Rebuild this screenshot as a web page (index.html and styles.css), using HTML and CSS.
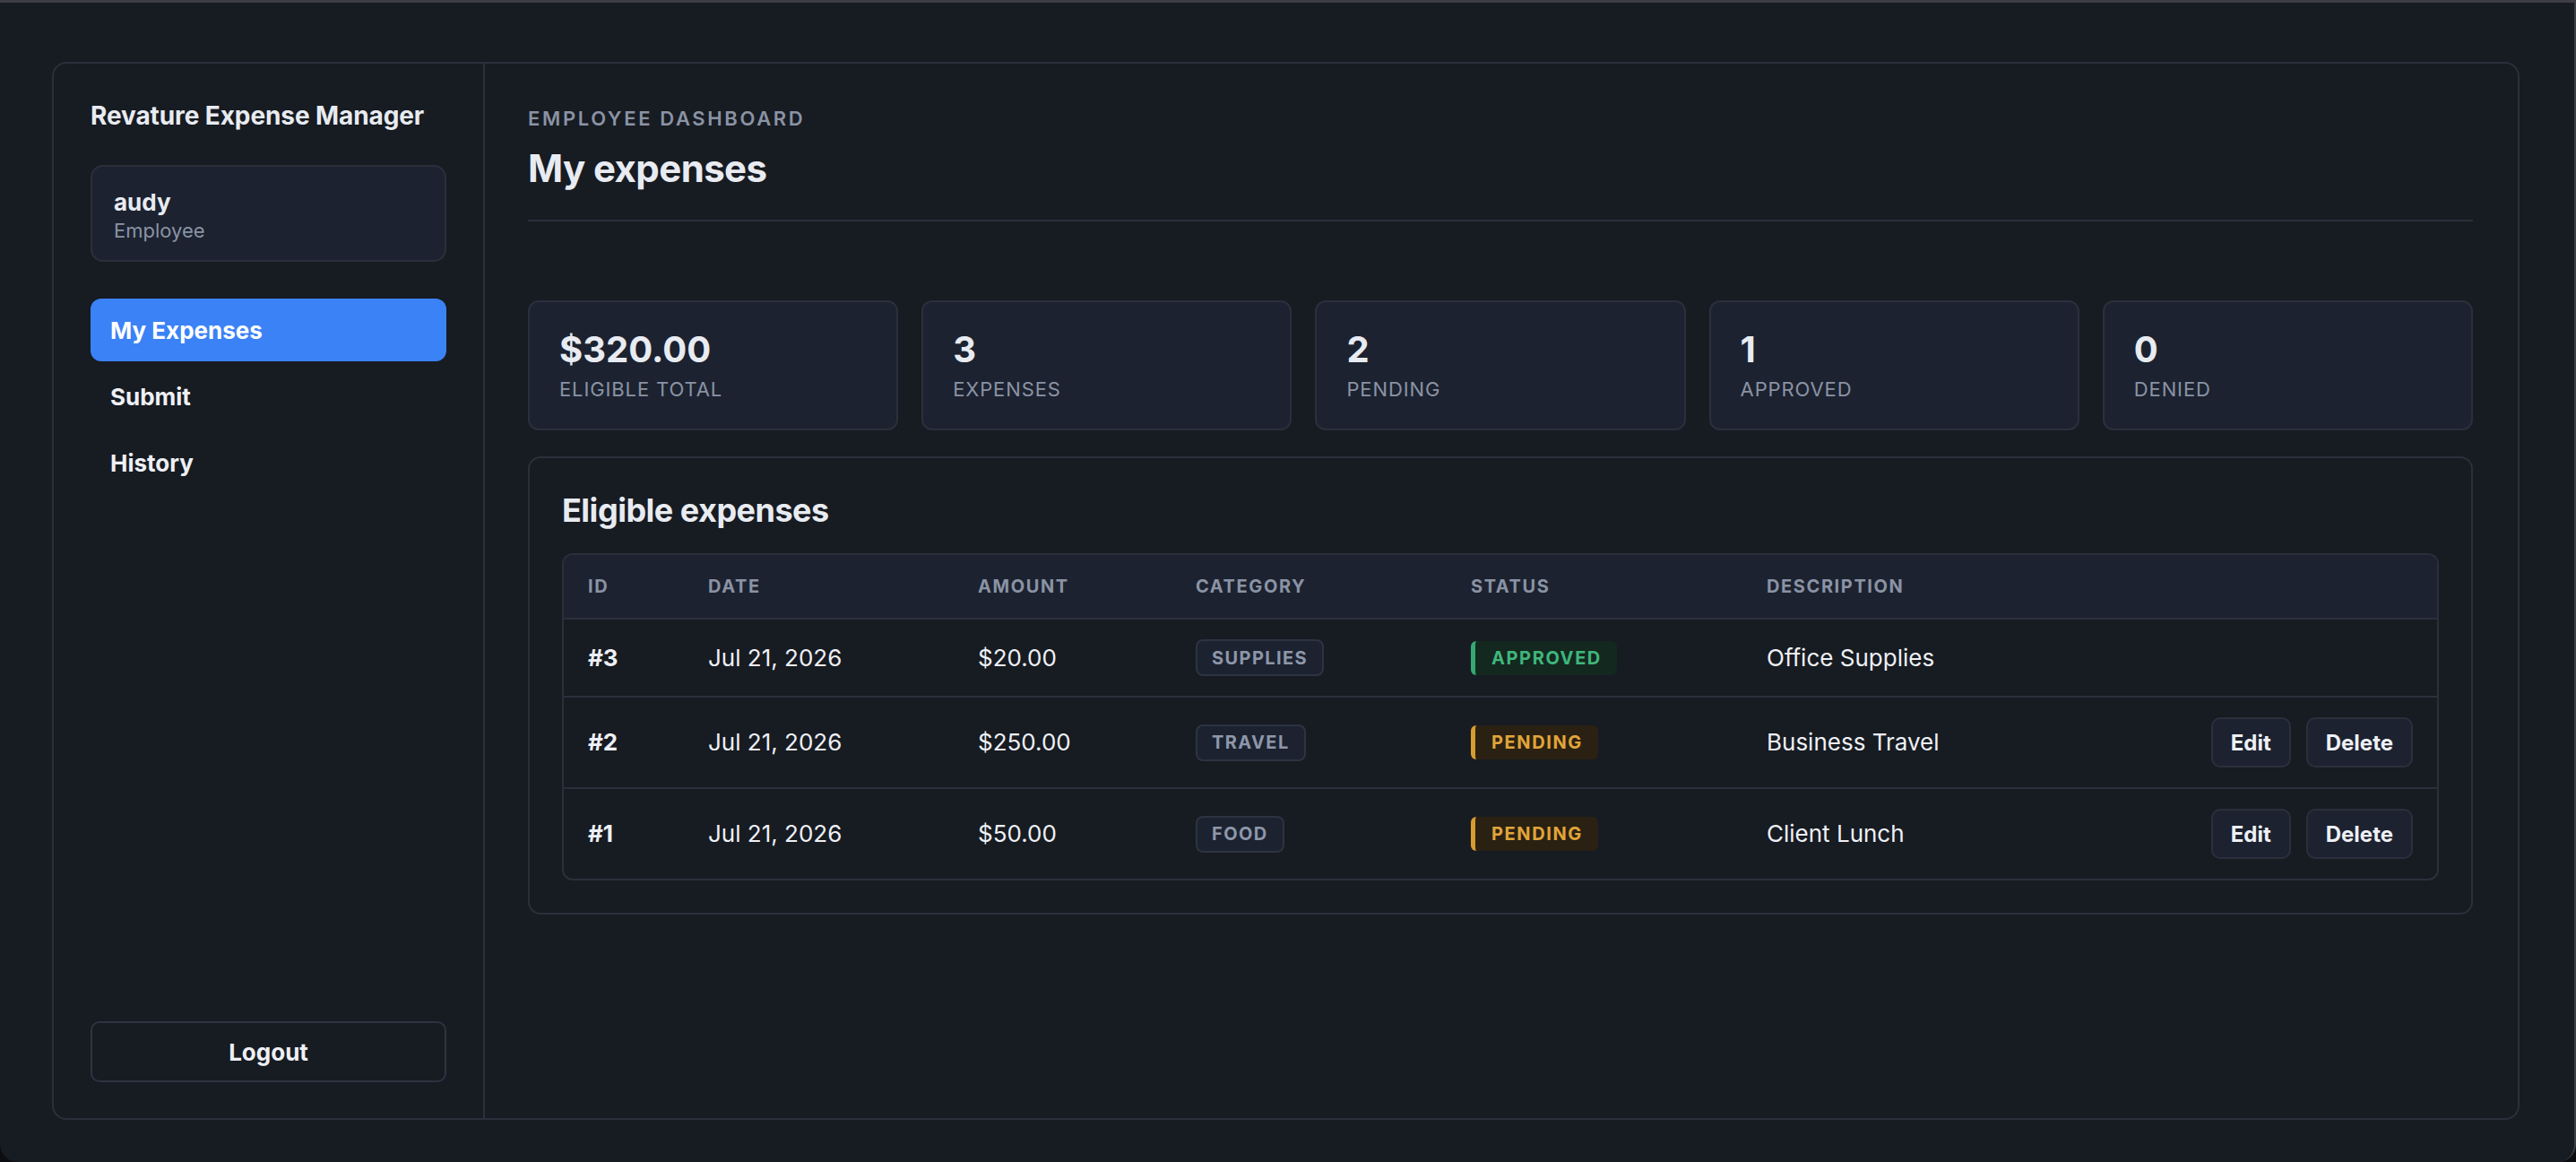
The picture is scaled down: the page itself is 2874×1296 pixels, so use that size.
FILE: index.html
```html
<!DOCTYPE html>
<html lang="en">
<head>
  <meta charset="UTF-8">
  <meta name="viewport" content="width=device-width, initial-scale=1.0">
  <title>Revature Expense Manager</title>
  <link rel="stylesheet" href="styles.css">
</head>
<body>
  <div class="window">
    <div class="shell">
      <aside class="sidebar">
        <div class="brand">Revature Expense Manager</div>

        <div class="user-box">
          <div class="user-name">audy</div>
          <div class="user-role">Employee</div>
        </div>

        <nav class="nav">
          <a class="nav-item active" href="#">My Expenses</a>
          <a class="nav-item" href="#">Submit</a>
          <a class="nav-item" href="#">History</a>
        </nav>

        <button class="logout" type="button">Logout</button>
      </aside>

      <main class="main">
        <header class="page-header">
          <div class="eyebrow">Employee Dashboard</div>
          <h1>My expenses</h1>
        </header>

        <!-- resumo -->
        <section class="stats">
          <div class="stat">
            <div class="stat-value">$320.00</div>
            <div class="stat-label">Eligible total</div>
          </div>
          <div class="stat">
            <div class="stat-value">3</div>
            <div class="stat-label">Expenses</div>
          </div>
          <div class="stat">
            <div class="stat-value">2</div>
            <div class="stat-label">Pending</div>
          </div>
          <div class="stat">
            <div class="stat-value">1</div>
            <div class="stat-label">Approved</div>
          </div>
          <div class="stat">
            <div class="stat-value">0</div>
            <div class="stat-label">Denied</div>
          </div>
        </section>

        <section class="panel">
          <h2>Eligible expenses</h2>

          <div class="table-wrap">
            <table class="expenses">
              <colgroup>
                <col class="col-id">
                <col class="col-date">
                <col class="col-amount">
                <col class="col-category">
                <col class="col-status">
                <col class="col-desc">
                <col class="col-actions">
              </colgroup>
              <thead>
                <tr>
                  <th>ID</th>
                  <th>Date</th>
                  <th>Amount</th>
                  <th>Category</th>
                  <th>Status</th>
                  <th>Description</th>
                  <th></th>
                </tr>
              </thead>
              <tbody>
                <tr>
                  <td class="id">#3</td>
                  <td>Jul 21, 2026</td>
                  <td>$20.00</td>
                  <td><span class="pill">Supplies</span></td>
                  <td><span class="badge approved">Approved</span></td>
                  <td>Office Supplies</td>
                  <td></td>
                </tr>
                <tr>
                  <td class="id">#2</td>
                  <td>Jul 21, 2026</td>
                  <td>$250.00</td>
                  <td><span class="pill">Travel</span></td>
                  <td><span class="badge pending">Pending</span></td>
                  <td>Business Travel</td>
                  <td>
                    <div class="actions">
                      <button class="btn" type="button">Edit</button>
                      <button class="btn" type="button">Delete</button>
                    </div>
                  </td>
                </tr>
                <tr>
                  <td class="id">#1</td>
                  <td>Jul 21, 2026</td>
                  <td>$50.00</td>
                  <td><span class="pill">Food</span></td>
                  <td><span class="badge pending">Pending</span></td>
                  <td>Client Lunch</td>
                  <td>
                    <div class="actions">
                      <button class="btn" type="button">Edit</button>
                      <button class="btn" type="button">Delete</button>
                    </div>
                  </td>
                </tr>
              </tbody>
            </table>
          </div>
        </section>
      </main>
    </div>
  </div>
</body>
</html>
```

FILE: styles.css
```css
* {
  box-sizing: border-box;
}

html,
body {
  margin: 0;
  padding: 0;
  height: 100%;
  background: #0c0d10;
}

body {
  font-family: Inter, "Noto Sans", Arial, sans-serif;
  color: #e8ebf1;
}

.window {
  height: 100vh;
  background: #171b22;
  border-top: 3px solid #3c3e44;
  border-right: 2px solid #3c3e44;
  border-bottom-right-radius: 20px;
  border-bottom-left-radius: 20px;
  display: flex;
  flex-direction: column;
  overflow: hidden;
}

.shell {
  flex: 1;
  display: flex;
  margin: 66px 61px 47px 58px;
  border: 2px solid #2a303b;
  border-radius: 16px;
  background: #171b22;
  overflow: hidden;
}

/* sidebar */

.sidebar {
  width: 481px;
  flex-shrink: 0;
  border-right: 2px solid #2a303b;
  padding: 40px 41px 40px 41px;
  display: flex;
  flex-direction: column;
}

.brand {
  font-size: 28px;
  line-height: 36px;
  font-weight: 700;
  letter-spacing: -0.1px;
}

.user-box {
  margin-top: 37px;
  height: 108px;
  padding: 23px 24px 0;
  background: #1c2230;
  border: 2px solid #2a303b;
  border-radius: 14px;
}

.user-name {
  font-size: 26px;
  line-height: 34px;
  font-weight: 700;
}

.user-role {
  font-size: 22px;
  line-height: 28px;
  color: #8a93a4;
}

.nav {
  margin-top: 41px;
  display: flex;
  flex-direction: column;
  gap: 4px;
}

.nav-item {
  height: 70px;
  display: flex;
  align-items: center;
  padding-left: 22px;
  border-radius: 12px;
  font-size: 26px;
  font-weight: 700;
  color: #eef0f5;
  text-decoration: none;
}

.nav-item.active {
  background: #3b82f6;
  color: #fff;
}

.logout {
  margin-top: auto;
  height: 68px;
  width: 100%;
  background: transparent;
  border: 2px solid #2d3340;
  border-radius: 10px;
  color: #eef0f5;
  font-family: inherit;
  font-size: 26px;
  font-weight: 700;
}

/* main */

.main {
  flex: 1;
  padding: 46px 50px 46px 48px;
  min-width: 0;
}

.page-header {
  padding-bottom: 31px;
  border-bottom: 2px solid #2a303b;
}

.eyebrow {
  font-size: 22px;
  line-height: 30px;
  font-weight: 600;
  letter-spacing: 0.12em;
  text-transform: uppercase;
  color: #8a93a4;
}

h1 {
  margin: 15px 0 0;
  font-size: 42px;
  line-height: 52px;
  font-weight: 700;
  letter-spacing: -0.6px;
}

.stats {
  margin-top: 88px;
  display: grid;
  grid-template-columns: repeat(5, 1fr);
  gap: 26px;
}

.stat {
  height: 145px;
  padding: 29px 33px 0;
  background: #1c2230;
  border: 2px solid #2a303b;
  border-radius: 12px;
}

.stat-value {
  font-size: 40px;
  line-height: 48px;
  font-weight: 700;
}

.stat-label {
  margin-top: 5px;
  font-size: 22px;
  line-height: 30px;
  letter-spacing: 0.04em;
  text-transform: uppercase;
  color: #8a93a4;
}

.panel {
  margin-top: 29px;
  padding: 36px;
  border: 2px solid #2a303b;
  border-radius: 14px;
}

h2 {
  margin: 0 0 26px;
  font-size: 36px;
  line-height: 44px;
  font-weight: 700;
  letter-spacing: -0.5px;
}

.table-wrap {
  border: 2px solid #2a303b;
  border-radius: 12px;
  overflow: hidden;
}

.expenses {
  width: 100%;
  border-collapse: collapse;
  table-layout: fixed;
}

.col-id { width: 134px; }
.col-date { width: 301px; }
.col-amount { width: 243px; }
.col-category { width: 307px; }
.col-status { width: 330px; }
.col-desc { width: 493px; }
.col-actions { width: 282px; }

.expenses th {
  background: #1c2230;
  height: 71px;
  padding: 0 27px;
  text-align: left;
  font-size: 20px;
  font-weight: 700;
  letter-spacing: 0.08em;
  text-transform: uppercase;
  color: #8a93a4;
  border-bottom: 2px solid #2a303b;
}

.expenses td {
  padding: 22px 27px;
  font-size: 26px;
  line-height: 32px;
  color: #eef0f5;
  border-bottom: 2px solid #2a303b;
  vertical-align: middle;
}

.expenses tbody tr:last-child td {
  border-bottom: none;
}

.expenses td.id {
  font-weight: 700;
}

.pill {
  display: inline-flex;
  align-items: center;
  height: 41px;
  padding: 0 16px;
  background: #1c2230;
  border: 2px solid #2c3441;
  border-radius: 8px;
  font-size: 20px;
  font-weight: 700;
  letter-spacing: 0.07em;
  text-transform: uppercase;
  color: #8d97a9;
}

.badge {
  display: inline-flex;
  align-items: center;
  height: 38px;
  padding: 0 17px 0 18px;
  border-left: 5px solid;
  border-radius: 6px;
  font-size: 20px;
  font-weight: 700;
  letter-spacing: 0.08em;
  text-transform: uppercase;
}

.badge.approved {
  background: #13281f;
  border-color: #36a872;
  color: #40b67c;
}

.badge.pending {
  background: #2a2113;
  border-color: #d79c2f;
  color: #e1a53a;
}

.actions {
  display: flex;
  justify-content: flex-end;
  gap: 17px;
}

.btn {
  height: 56px;
  padding: 0 20px;
  background: #1c2230;
  border: 2px solid #2a303b;
  border-radius: 10px;
  color: #eef0f5;
  font-family: inherit;
  font-size: 24px;
  font-weight: 700;
}
```
